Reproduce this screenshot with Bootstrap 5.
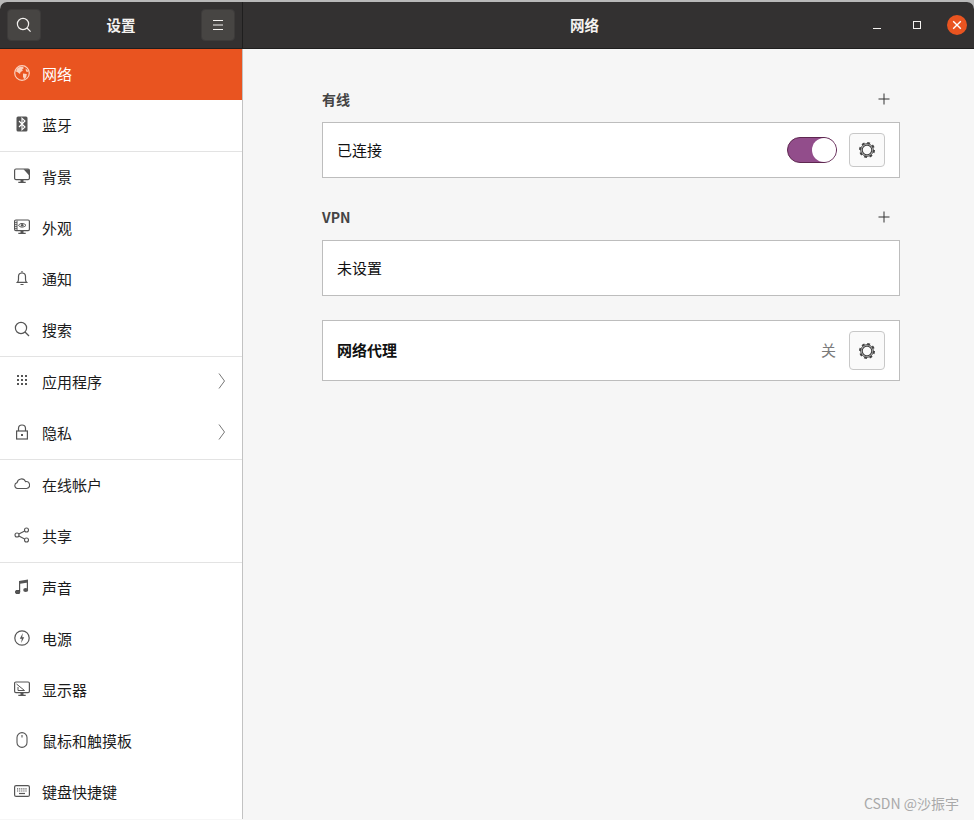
<!DOCTYPE html>
<html lang="zh-CN">
<head>
    <meta charset="UTF-8">
    <meta name="viewport" content="width=device-width, initial-scale=1.0">
    <title>设置</title>
    <link href="https://cdn.jsdelivr.net/npm/bootstrap@5.3.0/dist/css/bootstrap.min.css" rel="stylesheet">
    <style>
        html, body { height: 100%; }
        body {
            background-color: #b9b9b9;
            font-family: "Noto Sans CJK SC", "Noto Sans", sans-serif;
            font-size: 15px;
            color: #111;
            overflow: hidden;
        }
        .app-window {
            width: 974px;
            height: 818px;
            margin-top: 2px;
            border-radius: 7px 7px 0 0;
            overflow: hidden;
            background-color: #f6f6f6;
            position: relative;
        }
        .head-bar {
            height: 47px;
            background-color: #333131;
            border-bottom: 1px solid #1f1e1e;
            color: #f4f2f0;
        }
        .head-left {
            width: 243px;
            border-right: 1px solid #1f1e1e;
            padding: 0 7px;
        }
        .head-title { font-size: 14.5px; font-weight: 700; line-height: 1; }
        .head-btn {
            width: 34px;
            height: 32px;
            background-color: #474543;
            border: 1px solid #3d3b3a;
            border-radius: 4px;
        }
        .win-controls { width: 120px; padding-right: 7px; gap: 20px; }
        .win-btn { width: 20px; height: 20px; }
        .win-close { background-color: #e95420; border-radius: 50%; }
        .side-panel {
            width: 243px;
            height: 770px;
            background-color: #fff;
            border-right: 1px solid #c2c2c2;
        }
        .side-item {
            height: 51px;
            padding-left: 14px;
            padding-right: 16px;
            color: #1b1b1b;
        }
        .side-item.is-active { background-color: #e95420; color: #fff; }
        .side-icon { width: 16px; height: 16px; margin-right: 12px; margin-top: -3px; flex: none; color: #555; }
        .is-active .side-icon { color: #fbd0bd; }
        .side-sep { height: 1px; background-color: #e3e3e3; }
        .main-pane { padding: 35px 74px 0 79px; }
        .group-head { height: 30px; padding-right: 10px; margin-bottom: 8px; }
        .group-title { font-size: 14px; font-weight: 700; color: #444; }
        .setting-box {
            background-color: #fff;
            border: 1px solid #bdbdbd;
            padding: 0 14px;
        }
        .gear-btn {
            width: 36px;
            background-color: #fafafa;
            border: 1px solid #c8c8c8;
            border-radius: 4px;
        }
        .toggle-track {
            width: 50px;
            height: 26px;
            background-color: #924d8b;
            border: 1px solid #5e2750;
            border-radius: 13px;
            margin-right: 12px;
            padding: 0;
        }
        .toggle-knob {
            width: 24px;
            height: 24px;
            background-color: #fff;
            border-radius: 50%;
        }
        .off-label { color: #7a7a7a; margin-right: 13px; }
        .page-mark {
            position: absolute;
            right: 15px;
            bottom: 6px;
            font-size: 14px;
            color: #a9a9a9;
        }
        .foot-line { height: 2px; background-color: #8c8c8c; }
    </style>
</head>
<body>
    <div class="app-window">
        <div class="head-bar d-flex">
            <div class="head-left d-flex align-items-center justify-content-between">
                <div class="head-btn d-flex align-items-center justify-content-center">
                    <svg width="16" height="16" viewBox="0 0 16 16" fill="none" stroke="#f4f2f0" stroke-width="1.2"><circle cx="7" cy="7" r="5.6"/><path d="M11 11l3.6 3.6"/></svg>
                </div>
                <div class="head-title">设置</div>
                <div class="head-btn d-flex align-items-center justify-content-center">
                    <svg width="12" height="12" viewBox="0 0 12 12" fill="none" stroke="#f4f2f0" stroke-width="1"><path d="M1 1.5h10M1 6h10M1 10.5h10"/></svg>
                </div>
            </div>
            <div class="flex-grow-1 d-flex align-items-center justify-content-center ps-4">
                <div class="head-title ps-4 ms-4">网络</div>
            </div>
            <div class="win-controls d-flex align-items-center justify-content-end">
                <div class="win-btn d-flex align-items-center justify-content-center">
                    <svg width="10" height="10" viewBox="0 0 10 10" stroke="#f4f2f0" stroke-width="1"><path d="M1 8.5h8"/></svg>
                </div>
                <div class="win-btn d-flex align-items-center justify-content-center">
                    <svg width="10" height="10" viewBox="0 0 10 10" fill="none" stroke="#f4f2f0" stroke-width="1"><rect x="1.5" y="1.5" width="7" height="7"/></svg>
                </div>
                <div class="win-btn win-close d-flex align-items-center justify-content-center">
                    <svg width="10" height="10" viewBox="0 0 10 10" stroke="#fff" stroke-width="1.4"><path d="M1.2 1.2l7.6 7.6M8.8 1.2l-7.6 7.6"/></svg>
                </div>
            </div>
        </div>

        <div class="d-flex">
            <div class="side-panel">
                <div class="side-item is-active d-flex align-items-center">
                    <svg class="side-icon" viewBox="0 0 16 16"><circle cx="8" cy="8" r="7.3" fill="none" stroke="currentColor" stroke-width="1.2"/><path fill="currentColor" d="M3 3.5l3-1.8h3l.8 1.6-1.6 1 .6 1.5-2.2 1.3-.6 2L3.6 7.3 2 6.5zM9 8.5l3.8.6-.6 3.2-2 2-1.2-2.6zM11.5 3.5l2 1.6.8 2-2.2-.6z"/></svg>
                    <span>网络</span>
                </div>
                <div class="side-item d-flex align-items-center">
                    <svg class="side-icon" viewBox="0 0 16 16"><rect x="2.5" y="0.5" width="11" height="15" rx="1.5" fill="currentColor"/><path d="M5 5l6 6-3 2.8V2.2L11 5l-6 6" fill="none" stroke="#fff" stroke-width="1.1"/></svg>
                    <span>蓝牙</span>
                </div>
                <div class="side-sep"></div>
                <div class="side-item d-flex align-items-center">
                    <svg class="side-icon" viewBox="0 0 16 16"><path fill="none" stroke="currentColor" stroke-width="1.2" d="M2 1h12a1.4 1.4 0 0 1 1.4 1.4v8A1.4 1.4 0 0 1 14 11.6H2A1.4 1.4 0 0 1 .6 10.400v-8A1.400 1.400 0 0 1 2 1z"/><path fill="currentColor" d="M9.500 1.200h5.500v6zM6.500 12h3v1.800h2.200V15H4.300v-1.200h2.200z"/></svg>
                    <span>背景</span>
                </div>
                <div class="side-item d-flex align-items-center">
                    <svg class="side-icon" viewBox="0 0 16 16"><rect x=".6" y="1" width="14.800" height="10.600" rx="1.300" fill="none" stroke="currentColor" stroke-width="1.200"/><path d="M3 1.500v10" stroke="currentColor"/><path d="M1 3.500h2M1 5.500h2M1 7.500h2M1 9.500h2" stroke="currentColor" stroke-width=".8"/><path d="M4.500 6.300c1.500-2.400 5.500-2.400 7.500 0-2 2.400-6 2.400-7.500 0z" fill="none" stroke="currentColor"/><circle cx="8.200" cy="6.300" r="1.300" fill="currentColor"/><path fill="currentColor" d="M6.500 12h3v1.800h2.200V15H4.300v-1.200h2.200z"/></svg>
                    <span>外观</span>
                </div>
                <div class="side-item d-flex align-items-center">
                    <svg class="side-icon" viewBox="0 0 16 16"><path fill="none" stroke="currentColor" stroke-width="1.200" d="M3.500 12.300c.9-.8 1-1.800 1-3.300V6.500a3.500 3.500 0 0 1 7 0V9c0 1.500.1 2.500 1 3.300z"/><path d="M6.500 14.500h3M8 1v1.500" stroke="currentColor" stroke-width="1.200"/></svg>
                    <span>通知</span>
                </div>
                <div class="side-item d-flex align-items-center">
                    <svg class="side-icon" viewBox="0 0 16 16" fill="none" stroke="currentColor" stroke-width="1.200"><circle cx="7" cy="7" r="5.600"/><path d="M11 11l4 4"/></svg>
                    <span>搜索</span>
                </div>
                <div class="side-sep"></div>
                <div class="side-item d-flex align-items-center">
                    <svg class="side-icon" viewBox="0 0 16 16" fill="currentColor"><rect x="3" y="2" width="2" height="2"/><rect x="7" y="2" width="2" height="2"/><rect x="11" y="2" width="2" height="2"/><rect x="3" y="6" width="2" height="2"/><rect x="7" y="6" width="2" height="2"/><rect x="11" y="6" width="2" height="2"/><rect x="3" y="10" width="2" height="2"/><rect x="7" y="10" width="2" height="2"/><rect x="11" y="10" width="2" height="2"/></svg>
                    <span class="flex-grow-1">应用程序</span>
                    <svg width="8" height="16" viewBox="0 0 8 16" fill="none" stroke="#777" class="mb-1"><path d="M1 .5l5.500 7.500L1 15.500"/></svg>
                </div>
                <div class="side-item d-flex align-items-center">
                    <svg class="side-icon" viewBox="0 0 16 16"><rect x="2.600" y="7" width="10.800" height="8" fill="none" stroke="currentColor" stroke-width="1.200"/><path d="M4.500 7V4.500a3.500 3.500 0 0 1 7 0V7" fill="none" stroke="currentColor" stroke-width="1.200"/><rect x="7" y="10" width="2" height="2" fill="currentColor"/></svg>
                    <span class="flex-grow-1">隐私</span>
                    <svg width="8" height="16" viewBox="0 0 8 16" fill="none" stroke="#777" class="mb-1"><path d="M1 .5l5.500 7.500L1 15.500"/></svg>
                </div>
                <div class="side-sep"></div>
                <div class="side-item d-flex align-items-center">
                    <svg class="side-icon" viewBox="0 0 16 16"><path fill="none" stroke="currentColor" stroke-width="1.100" d="M3.500 12.500a3 3 0 0 1-.4-5.900 4.400 4.400 0 0 1 8.400-1 3.500 3.500 0 0 1 1.200 6.900z"/></svg>
                    <span>在线帐户</span>
                </div>
                <div class="side-item d-flex align-items-center">
                    <svg class="side-icon" viewBox="0 0 16 16" fill="none" stroke="currentColor" stroke-width="1.100"><circle cx="3" cy="8" r="2"/><circle cx="12.500" cy="3" r="2"/><circle cx="12.500" cy="13" r="2"/><path d="M4.800 7l5.900-3.100M4.800 9l5.900 3.100"/></svg>
                    <span>共享</span>
                </div>
                <div class="side-sep"></div>
                <div class="side-item d-flex align-items-center">
                    <svg class="side-icon" viewBox="0 0 16 16"><path fill="currentColor" d="M5 2l9-1.500v3L6.200 4.700V13H5zM12.800 3.500H14V11h-1.200z"/><ellipse cx="3.700" cy="13" rx="2.500" ry="2"/><ellipse cx="11.700" cy="11" rx="2.500" ry="2" fill="currentColor"/><ellipse cx="3.700" cy="13" rx="2.500" ry="2" fill="currentColor"/></svg>
                    <span>声音</span>
                </div>
                <div class="side-item d-flex align-items-center">
                    <svg class="side-icon" viewBox="0 0 16 16"><circle cx="8" cy="8" r="7.200" fill="none" stroke="currentColor" stroke-width="1.200"/><path fill="currentColor" d="M8.800 3L5.800 8.800h2L7.200 13l3-5.800h-2z"/></svg>
                    <span>电源</span>
                </div>
                <div class="side-item d-flex align-items-center">
                    <svg class="side-icon" viewBox="0 0 16 16"><rect x=".6" y="1" width="14.800" height="10.600" rx="1.300" fill="none" stroke="currentColor" stroke-width="1.200"/><path d="M2.500 3l8 6.500h-6.500V6" fill="none" stroke="currentColor"/><path fill="currentColor" d="M6.500 12h3v1.800h2.200V15H4.300v-1.200h2.200z"/></svg>
                    <span>显示器</span>
                </div>
                <div class="side-item d-flex align-items-center">
                    <svg class="side-icon" viewBox="0 0 16 16" fill="none" stroke="currentColor" stroke-width="1.100"><rect x="3" y=".6" width="10" height="14.800" rx="5"/><path d="M8 3v2.500"/></svg>
                    <span>鼠标和触摸板</span>
                </div>
                <div class="side-item d-flex align-items-center">
                    <svg class="side-icon" viewBox="0 0 16 16"><rect x=".6" y="2.600" width="14.800" height="10.800" rx="1.500" fill="none" stroke="currentColor" stroke-width="1.200"/><path d="M3 5.800h10M3 8h10" stroke="currentColor" stroke-width="1.200" stroke-dasharray="1.200 .9"/><path d="M5 10.500h6" stroke="currentColor" stroke-width="1.200"/></svg>
                    <span>键盘快捷键</span>
                </div>
            </div>

            <div class="main-pane flex-grow-1">
                <div class="group-head d-flex align-items-center justify-content-between">
                    <span class="group-title">有线</span>
                    <svg width="12" height="12" viewBox="0 0 12 12" stroke="#333" stroke-width="1"><path d="M6 .5v11M.5 6h11"/></svg>
                </div>
                <div class="setting-box d-flex align-items-center mb-4 box-tall">
                    <span class="flex-grow-1">已连接</span>
                    <div class="toggle-track d-flex justify-content-end"><div class="toggle-knob"></div></div>
                    <div class="gear-btn d-flex align-items-center justify-content-center">
                        <svg width="18" height="18" viewBox="0 0 18 18" fill="none" stroke="#444"><circle cx="9" cy="9" r="4.800" stroke-width="1.200"/><circle cx="9" cy="9" r="7" stroke-width="2" stroke-dasharray="2.800 2.700"/><circle cx="9" cy="9" r="6.300" stroke-width="1"/></svg>
                    </div>
                </div>
                <div class="group-head d-flex align-items-center justify-content-between">
                    <span class="group-title">VPN</span>
                    <svg width="12" height="12" viewBox="0 0 12 12" stroke="#333" stroke-width="1"><path d="M6 .5v11M.5 6h11"/></svg>
                </div>
                <div class="setting-box d-flex align-items-center mb-4 box-tall">
                    <span>未设置</span>
                </div>
                <div class="setting-box d-flex align-items-center box-proxy">
                    <span class="flex-grow-1 fw-bold">网络代理</span>
                    <span class="off-label">关</span>
                    <div class="gear-btn d-flex align-items-center justify-content-center gear-tall">
                        <svg width="18" height="18" viewBox="0 0 18 18" fill="none" stroke="#444"><circle cx="9" cy="9" r="4.800" stroke-width="1.200"/><circle cx="9" cy="9" r="7" stroke-width="2" stroke-dasharray="2.800 2.700"/><circle cx="9" cy="9" r="6.300" stroke-width="1"/></svg>
                    </div>
                </div>
            </div>
        </div>
        <div class="page-mark">CSDN @沙振宇</div>
    </div>
    <style>
        .box-tall { height: 56px; }
        .box-tall .gear-btn { height: 34px; }
        .box-proxy { height: 61px; }
        .gear-tall { height: 39px; }
    </style>
    <div class="foot-line"></div>
    <script src="https://cdn.jsdelivr.net/npm/bootstrap@5.3.0/dist/js/bootstrap.bundle.min.js"></script>
</body>
</html>
